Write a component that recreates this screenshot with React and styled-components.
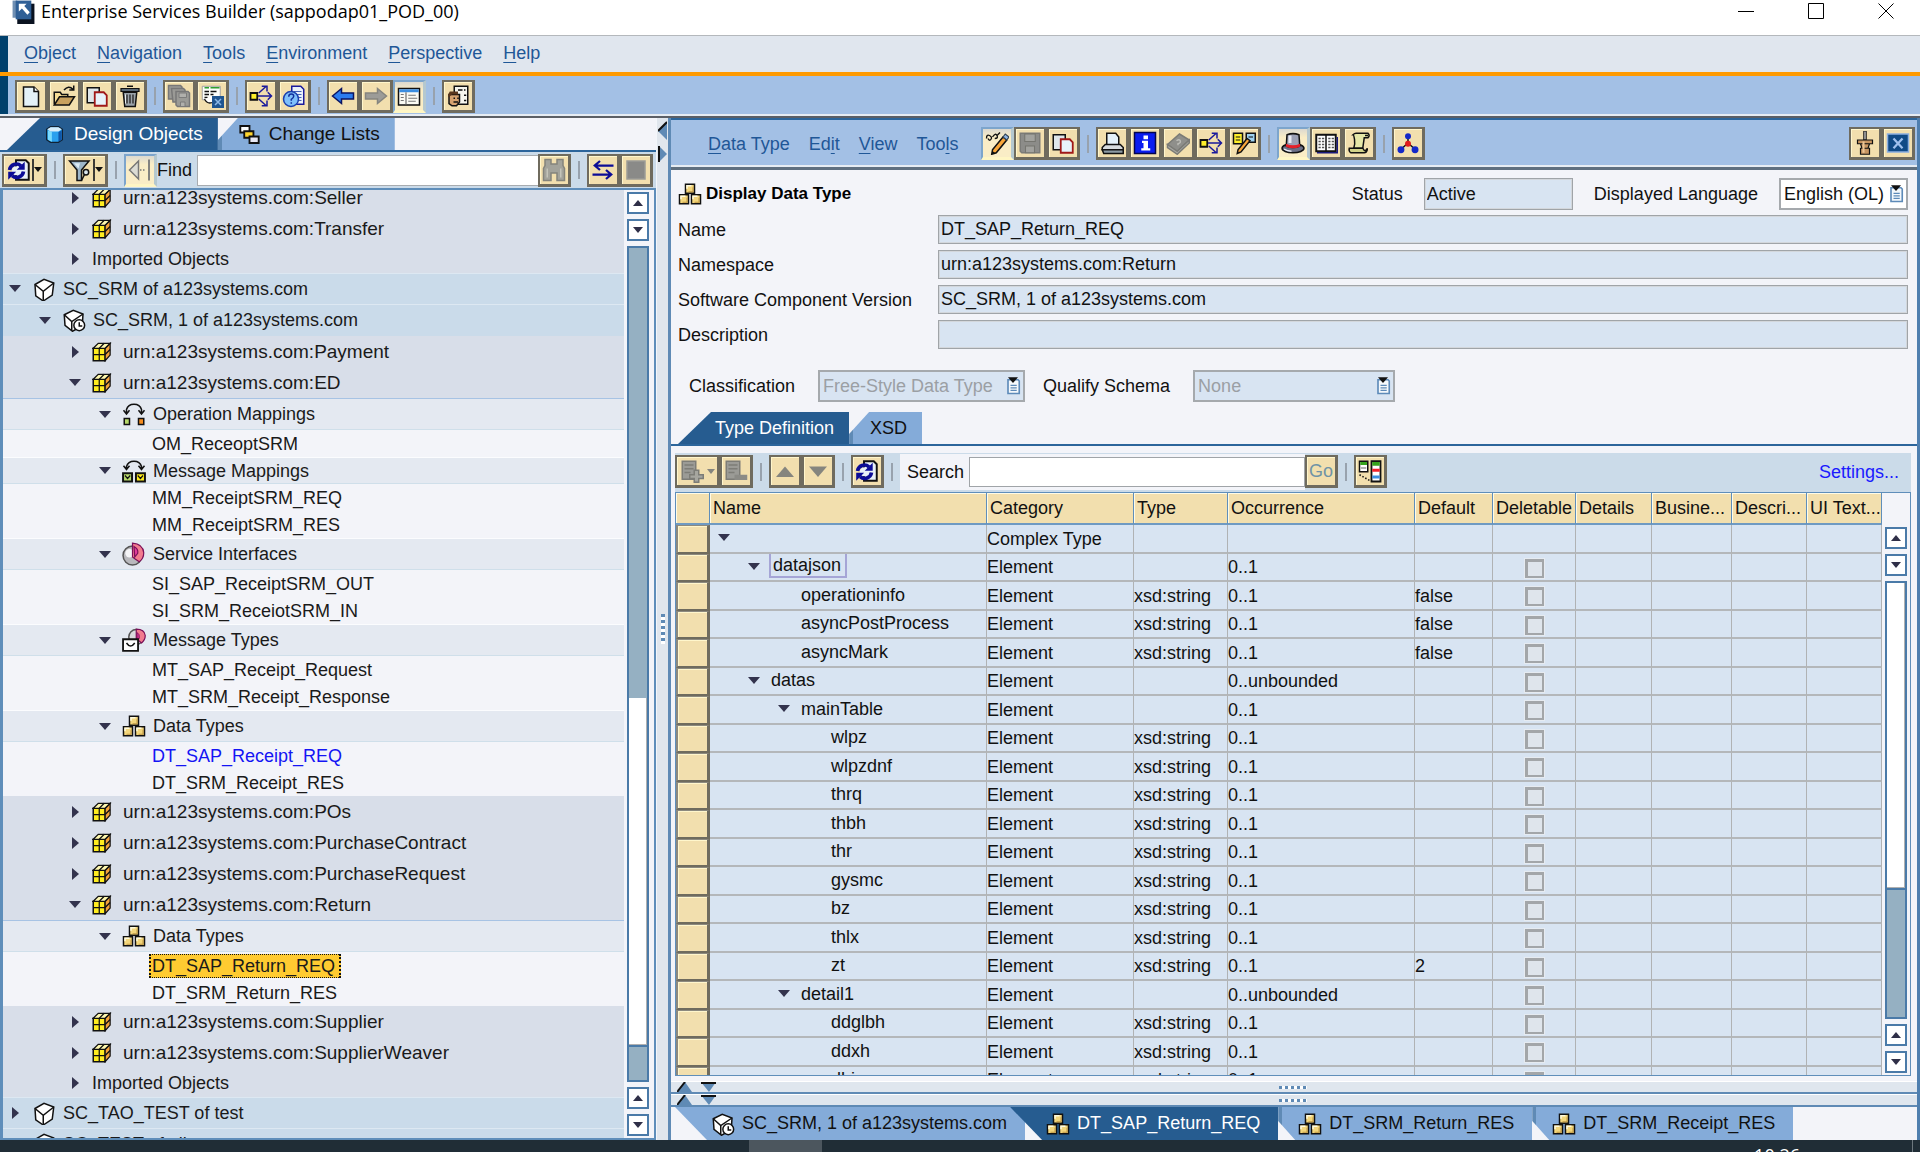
import React from "react";
import styled, { createGlobalStyle, css } from "styled-components";

const GlobalStyle = createGlobalStyle`
  *, *::before, *::after {
    box-sizing: border-box;
  }
  body {
    margin: 0;
    overflow: hidden;
  }
  body, button, input, select, table {
    font-family: "Liberation Sans", Arial, sans-serif;
    font-size: 18px;
    color: #111;
  }
  button {
    padding: 0;
    border: 0;
    background: none;
  }
`;

/* ---------- icons, drawn on a 16 unit grid ---------- */

const k = "#111";

const cube = (x, y) => (
  <>
    <path d={`M${x} ${y}h6v6h-6z`} fill="#f3d67c" stroke={k} />
    <path d={`M${x + 1} ${y + 3}v-2h3`} fill="none" stroke="#fffbe0" />
    <path d={`M${x + 2} ${y + 5}h3v-3`} fill="none" stroke="#b98f3c" strokeWidth=".6" />
  </>
);

const icons = {
  app: (
    <>
      <path d="M4 3h11v13H4z" fill="#0a1220" />
      <path d="M1 1h3v11H1z" fill="#6f8fb3" />
      <path d="M3 1h10v12H3z" fill="#2f5f96" />
      <path d="M5 3h5L8.500 4.500l3.500 4-1.500 1.500-3.500-4L5 8z" fill="#fff" />
    </>
  ),
  page: (
    <>
      <path d="M3 2h7l3 3v10H3z" fill="#e4f1f8" stroke={k} />
      <path d="M10 2v3h3" fill="#fff" stroke={k} />
    </>
  ),
  folder: (
    <>
      <path d="M1.500 13.500v-8h4l1 1.500h4v2" fill="#f6dc95" stroke={k} />
      <path d="M1.500 14l3.500-5.500h10L11.500 14z" fill="#c9a15e" stroke={k} />
      <path d="M8 4q3-3.500 6-.5M14.500 1v3h-3" fill="none" stroke={k} />
    </>
  ),
  copy: (
    <>
      <path d="M1.500 2.500h8v10h-8z" fill="#dfe6ea" stroke={k} />
      <path d="M6.500 5.500h6l2 2v7h-8z" fill="#e8f2fa" stroke="#a01818" strokeWidth="1.200" />
    </>
  ),
  trash: (
    <>
      <path d="M3.500 5.500h9l-1 9.500h-7z" fill="#9aa3aa" stroke={k} />
      <path d="M2 3h12v2H2z" fill="#5b6a77" stroke={k} strokeWidth=".8" />
      <path d="M6 1.500h4" stroke={k} />
      <path d="M6 7v6M8 7v6M10 7v6" stroke="#333" />
      <path d="M5 7v6" stroke="#e8eef2" strokeWidth=".7" />
    </>
  ),
  saveAll: (
    <>
      <path d="M1 1h8l1 1v8H1z" fill="#9a9a96" stroke="#777" />
      <path d="M3 3h8l1 1v8H4z" fill="#9a9a96" stroke="#777" />
      <path d="M6 5h8l1 1v9H7l-1-1z" fill="#9a9a96" stroke="#777" />
      <path d="M8 6h5v3H8zM9 12h3v3H9z" fill="#b0b0ac" stroke="#777" strokeWidth=".6" />
    </>
  ),
  listCancel: (
    <>
      <path d="M1.500 1.500h12v9h-12z" fill="#fbfdfa" stroke="#999" strokeWidth=".6" />
      <path d="M3 2.500h3M7 2.500h6" stroke="#2fa02f" />
      <path d="M3 5h3M7 5h4M3 7h3M3 9h2M7 7h2" stroke={k} strokeWidth=".9" />
      <path d="M3 10q2 4 6 2v-4" fill="#fff" stroke={k} strokeWidth=".8" />
      <path d="M8 8h8v8H8z" fill="#1f5590" />
      <path d="M10 10l4 4M14 10l-4 4" stroke="#8db8e6" />
    </>
  ),
  whereUsed: (
    <>
      <path d="M1 6h4.500v4.500H1z" fill="#ffef2a" stroke={k} strokeWidth="1.200" />
      <path d="M6 8h9M12.500 5.500L15 8l-2.500 2.500M6.500 6l5-4.500M8.500 1.500h3.500V5M6.500 10l5 4.500M8.500 14.500h3.500V11" fill="none" stroke="#1a1a9c" />
    </>
  ),
  helpPage: (
    <>
      <path d="M6.500 1.500h6l2 2v10h-8z" fill="#eaf1fb" stroke="#1a1a9c" />
      <path d="M8 5h5M10 7h3M11 9h2M11 11h2" stroke="#4564b8" strokeWidth=".8" />
      <circle cx="6" cy="10" r="5" fill="#7fc0fb" stroke="#1a3fae" />
      <path d="M4.500 8.500q0-1.800 1.700-1.800t1.600 1.500q0 1-1.600 2v1M6.200 12.200v1" fill="none" stroke="#12309c" />
    </>
  ),
  back: <path d="M1 8l6-5v3h8v4H7v3z" fill="#2b7cf0" stroke="#0a1462" />,
  forward: <path d="M15 8L9 3v3H1v4h8v3z" fill="#9c9c98" stroke="#85857f" />,
  layout: (
    <>
      <path d="M1 3h14v11H1z" fill="#fbfbf4" stroke={k} />
      <path d="M1.500 3.500h13v2h-13z" fill="#3c8ee0" />
      <path d="M6 5.500v8" stroke="#888" />
      <path d="M2.500 7h2M2.500 9h2M2.500 11h2M7.500 7.500h5M7.500 9.500h6M7.500 11.500h5" stroke="#777" strokeWidth=".8" />
    </>
  ),
  person: (
    <>
      <path d="M5.500 1.500h9v12h-9z" fill="#f6f6ee" stroke={k} />
      <path d="M8 4h3M12 4h1M12 7.500h1.500M12 11h1.500" stroke={k} />
      <path d="M2 7h7v5l-2 2.500H4L2 13z" fill="#d6a26f" stroke={k} />
      <path d="M1.500 9V7l1-2H8v2H4z" fill="#5a371d" />
      <path d="M5 9.500h1M7.500 9.500h1M5 12h3" stroke={k} />
    </>
  ),
  database: (
    <>
      <path d="M2 4l3-2h6l3 2v8l-3 2H5l-3-2z" fill="#2aa0ee" stroke="#123" />
      <path d="M3 5v7l3 1.500V6z" fill="#79dcff" />
      <path d="M11 6v7.500l2.500-1.500V5z" fill="#0f55a8" />
      <path d="M2.500 4L5 2.500h6L13.500 4 11 5.800H5z" fill="#d8edf9" />
    </>
  ),
  changeList: (
    <>
      <path d="M1 1.500h7v5H1z" fill="#fff" stroke={k} strokeWidth="1.400" />
      <path d="M4 5.500h7v5H4z" fill="#ffd52e" stroke={k} strokeWidth="1.400" />
      <path d="M8 9.500h7v5H8z" fill="#e8e8f4" stroke={k} strokeWidth="1.400" />
    </>
  ),
  refresh: (
    <>
      <path d="M6 1.500h6.500l2 2v11H6z" fill="#e9f1f8" stroke={k} strokeWidth="1.300" />
      <circle cx="6.300" cy="8.500" r="3" fill="#e9f1f8" />
      <path d="M1.700 8a4.600 4.600 0 0 1 7.600-2.800M11 9a4.600 4.600 0 0 1-7.600 2.800" fill="none" stroke="#0c0c96" strokeWidth="2.400" />
      <path d="M11.800 2.500v5.300H6.500zM.800 14.500V9.200h5.300z" fill="#0c0c96" />
    </>
  ),
  filter: (
    <>
      <path d="M1 2h13l-5 6v7H6V8z" fill="#9db6c9" stroke={k} />
      <path d="M4 3.500h4L7 7z" fill="#dcebf5" />
      <circle cx="12" cy="9.500" r="1.800" fill="#dbe7ee" stroke={k} />
      <path d="M9 15l2-4" stroke={k} />
    </>
  ),
  collapse: (
    <>
      <path d="M1 8l6-6v12z" fill="#dcdcd4" stroke="#777" />
      <path d="M8 8h4" stroke="#777" strokeDasharray="1 1" />
      <path d="M14 1v14" stroke="#777" strokeWidth="1.200" />
    </>
  ),
  binoculars: (
    <>
      <path d="M2 1h4v3h4V1h4v4l1 2v8h-5v-5H6v5H1V7l1-2z" fill="#a3a39b" stroke="#84847c" />
      <path d="M3.500 7v6M12.500 7v6" stroke="#c4c4ba" />
    </>
  ),
  swap: <path d="M15 5H3M6 2L2.500 5 6 8M1 11h12M10 8l3.500 3-3.500 3" fill="none" stroke="#0c0c96" strokeWidth="1.500" />,
  stop: <path d="M2 2h12v12H2z" fill="#8a8a88" stroke="#9c9c96" />,
  pack: (
    <>
      <path d="M1 5h9.500v10H1z" fill="#ffec1f" stroke={k} strokeWidth="1.200" />
      <path d="M10.500 5l4-4v9.500l-4 4.500z" fill="#f2a23c" stroke={k} />
      <path d="M1 5l4-4h9.500l-4 4z" fill="#fff9b0" stroke={k} />
      <path d="M5.800 5v10M1 10h9.500M5.800 5l4-4M10.500 10l4-4" stroke={k} />
    </>
  ),
  box: (
    <>
      <path d="M2 5l6-3.500 6.500 2.500-1 8-6 4-5-3.500z" fill="#fff" stroke={k} />
      <path d="M2 5l5.500 4.500L14.500 4M7.500 9.500V16" fill="none" stroke={k} />
    </>
  ),
  boxClock: (
    <>
      <path d="M1.500 4.500l6-3 6.500 2.500-.5 8-6.500 3.500-5-4z" fill="#fff" stroke={k} />
      <path d="M1.500 4.500L6.500 9 14 4M6.500 9v6" fill="none" stroke={k} />
      <circle cx="11.500" cy="11.500" r="3.600" fill="#fff" stroke={k} />
      <path d="M11.500 9.500v2.500h2" fill="none" stroke={k} />
    </>
  ),
  opMap: (
    <>
      <path d="M3 8V5q1-3.500 5-3.500T13 5v3M1 5.500L3 8l2-2.500M11 5.500L13 8l2-2.500" fill="none" stroke={k} />
      <path d="M1.500 11h3.500v4H1.500z" fill="#b7d96a" stroke={k} />
      <path d="M11 11h3.500v4H11z" fill="#f58b1e" stroke={k} />
    </>
  ),
  msgMap: (
    <>
      <path d="M3 7V5q1-3.500 5-3.500T13 5v2M1 4.500L3 7l2-2.500M11 4.500L13 7l2-2.500" fill="none" stroke={k} />
      <path d="M.700 9.500h6v5.500h-6z" fill="#b7d96a" stroke={k} strokeWidth="1.300" />
      <path d="M9.300 9.500h6v5.500h-6z" fill="#ffec1f" stroke={k} strokeWidth="1.300" />
      <path d="M2 11l1.700 2L5.500 11M10.500 11l1.800 2 1.700-2" fill="none" stroke={k} strokeWidth=".8" />
    </>
  ),
  service: (
    <>
      <circle cx="7" cy="9" r="6.300" fill="#b9b9bd" stroke="#555" />
      <circle cx="5" cy="7.500" r="2.800" fill="#f4f4f6" />
      <path d="M7 .7q7 .5 7.500 6.500 0 4-3 6L9 11.500 7 10z" fill="#f27b8e" stroke="#7a0f58" strokeWidth=".8" />
      <path d="M8 3q3 1.500 2.500 4.500L8.500 10z" fill="#e23c9c" stroke="#7a0f58" strokeWidth=".8" />
    </>
  ),
  msgType: (
    <>
      <circle cx="9.500" cy="6" r="5" fill="#d9d9dd" stroke="#555" />
      <path d="M9.500.7Q15 .7 15.500 5q0 3-2.500 5l-3.500-3z" fill="#f27b8e" stroke="#7a0f58" strokeWidth=".8" />
      <path d="M10 3q2 1 1.500 4l-1.500 1z" fill="#e23c9c" stroke="#7a0f58" strokeWidth=".6" />
      <path d="M.7 7.500h10v7.800H.7z" fill="#fff" stroke={k} strokeWidth="1.200" />
      <path d="M3 10q2.700 4 5.500 0" fill="none" stroke={k} />
    </>
  ),
  dataType: (
    <>
      {cube(5, 1.5)}
      {cube(1, 8.5)}
      {cube(9, 8.5)}
    </>
  ),
  edit: (
    <>
      <path d="M1 5q0-3 2-2t1 2.500T2 5M5 4q2-3 3-1T6.500 5M8 3l2-2" fill="none" stroke={k} strokeWidth=".9" />
      <path d="M5 12.500l7-8.500 2.500 2-7 8.500-3 1z" fill="#f9a63a" stroke={k} />
      <path d="M12 4l1.500-2 2.500 2-1.500 2z" fill="#8fb6e8" stroke="#345" strokeWidth=".8" />
      <path d="M4.300 15.500l.6-2.200 1.800 1.200z" fill={k} />
    </>
  ),
  save: (
    <>
      <path d="M1.500 1.500h13v13h-12l-1-1z" fill="#8c8c89" stroke="#7b7b78" />
      <path d="M4.500 2h7v5h-7zM5 10h6v4.500H5z" fill="#a2a29e" stroke="#75756f" strokeWidth=".7" />
    </>
  ),
  print: (
    <>
      <path d="M4.500 1.500h6l2 2.500v6h-8z" fill="#e4f1fa" stroke={k} />
      <path d="M1.500 11l2-2h10l2 2v1.500h-14z" fill="#d7dbde" stroke={k} />
      <path d="M1.500 12.500h14v2.500h-13z" fill="#8d9ba5" stroke={k} />
    </>
  ),
  info: (
    <>
      <path d="M1 1h14v14H1z" fill="#0a1cf0" stroke="#04044e" />
      <path d="M7 3h3v2.500H7zM6 6.500h4v5h1.500V13H5.500v-1.500H7V8H6z" fill="#fff" />
    </>
  ),
  book: (
    <>
      <path d="M1 9l8-7 6.500 4-8 7.500z" fill="#8f8f8b" stroke="#7b7b76" />
      <path d="M1 9l6.500 4.500 8-7.500v2l-8 7.500L1 11z" fill="#a9a9a4" stroke="#7b7b76" />
      <path d="M7 6.500q2-1.500 2.500 0T8 8.500v1" fill="none" stroke="#bcbcb6" />
    </>
  ),
  compare: (
    <>
      <path d="M1 1.500h6v7H1z" fill="#fff02a" stroke={k} />
      <path d="M2.500 4h3M2.500 6h3" stroke={k} strokeWidth=".7" />
      <path d="M9.500 1.500h6v6h-6z" fill="#9fd2f0" stroke={k} />
      <path d="M11 4h3" stroke={k} strokeWidth=".7" />
      <path d="M4 12.500L10 5l2 1.500-6 7.500-2.500 1z" fill="#f9a63a" stroke={k} />
    </>
  ),
  hat: (
    <>
      <ellipse cx="8" cy="11.500" rx="7.300" ry="3" fill="#6b6f86" stroke={k} />
      <path d="M4 2.500q4-1.500 8 0l.5 7.500q-4.500 2-9 0z" fill="#9a9fb5" stroke={k} />
      <path d="M6 3v5" stroke="#e8eaf4" strokeWidth="2" />
      <path d="M3.300 8.500q4.700 2 9.400 0v2q-4.700 2-9.400 0z" fill="#e5202a" />
      <path d="M2 12q2 1.500 5 1.500" fill="none" stroke="#e8eaf4" />
    </>
  ),
  openBook: (
    <>
      <path d="M1.500 2.500h13v11h-13z" fill="#fff" stroke={k} strokeWidth="1.300" />
      <path d="M8 2.500v12" stroke={k} />
      <path d="M3 5h4M3 7h4M3 9h4M3 11h4M9.500 5h4M9.500 7h4M9.500 9h4M9.500 11h4" stroke="#555" strokeWidth=".9" strokeDasharray="1.500 .8" />
      <path d="M2 14.500h13.500V4" fill="none" stroke="#1a1a7c" />
    </>
  ),
  scroll: (
    <>
      <path d="M4 2.500q1-1 2-1h8q1.500 1.500 0 3h-2.500l-1 7h-6q1-3 .5-6T4 2.500z" fill="#e6e8a8" stroke={k} />
      <path d="M1.500 11.500h9q1.500 3 3 0v1q-.5 2-2 2h-9q-1.500-1-1-3z" fill="#d2d38a" stroke={k} />
      <path d="M12 3h2" stroke={k} />
    </>
  ),
  molecule: (
    <>
      <path d="M8 3v5l-5 4.500M8 8l5 4.500" fill="none" stroke={k} />
      <circle cx="8" cy="3.500" r="2" fill="#1428c8" />
      <circle cx="3.300" cy="12.500" r="2.300" fill="#1428c8" />
      <circle cx="12.700" cy="12.500" r="2.300" fill="#1428c8" />
      <circle cx="8" cy="8.500" r="2" fill="#e01c1c" />
    </>
  ),
  pin: (
    <>
      <path d="M7.200 0v6h1.600V0z" fill="#ccc" stroke={k} strokeWidth=".7" />
      <path d="M3 6h10v2.500H3zM5 8.500h6l-1 3h-4zM5 11.500h6v4H5z" fill="#c79561" stroke={k} strokeWidth=".8" />
      <path d="M7 7v7.500" stroke="#ecc596" strokeWidth="1.400" />
    </>
  ),
  close: (
    <>
      <path d="M1 2h14v12H1z" fill="#104a86" stroke="#8aaee0" />
      <path d="M5 5l6 6.500M11 5l-6 6.500" stroke="#9fc0ee" strokeWidth="1.500" />
    </>
  ),
  addRow: (
    <>
      <path d="M1.500 1.500h9v12h-9z" fill="#9b9b96" stroke="#7d7d77" />
      <path d="M3 4h6M3 6.500h6M3 9h4" stroke="#7d7d77" />
      <path d="M9.500 7.500h3v3h3v2.500h-3v2.500h-3V13h-3v-2.500h3z" fill="#a6a69f" stroke="#7d7d77" />
    </>
  ),
  removeRow: (
    <>
      <path d="M1.500 1.500h9v12h-9z" fill="#9b9b96" stroke="#7d7d77" />
      <path d="M3 4h6M3 6.500h6M3 9h4" stroke="#7d7d77" />
      <path d="M7 10.500h8.500v3.500H7z" fill="#8b8b86" />
    </>
  ),
  up: <path d="M2 12h12L8 5z" fill="#85857e" />,
  down: <path d="M2 5h12l-6 7z" fill="#85857e" />,
  mapping: (
    <>
      <path d="M1 1.500h5.500v7H1z" fill="#fff" stroke={k} />
      <path d="M1.500 2h4.500v2H1.500z" fill="#35a31c" />
      <path d="M2 6h3.500" stroke="#999" />
      <path d="M9 1.500h6v13.500H9z" fill="#fff" stroke={k} strokeWidth="1.200" />
      <path d="M9.500 2h5v2.500h-5z" fill="#35a31c" />
      <path d="M9.500 6.500h5v2h-5z" fill="#f3202a" />
      <path d="M9.500 11h5v2h-5z" fill="#3c8ee0" />
      <path d="M1 10.500l7 4" stroke={k} strokeDasharray="1 1.200" />
    </>
  ),
  dropdown: (
    <>
      <path d="M4 3h8l1 1v10H4z" fill="#f4f8fc" stroke="#5d8ab8" strokeWidth="1.300" />
      <path d="M6 7.500h5M6 9.500h5M6 11.500h5" stroke="#5d8ab8" />
      <path d="M4 1h8L8 5.500z" fill={k} />
    </>
  ),
};

const Icon = ({ name, size = 24 }) => (
  <svg width={size} height={size} viewBox="0 0 16 16" aria-hidden="true">
    {icons[name]}
  </svg>
);

/* ---------- window frame ---------- */

const Window = styled.div`
  height: 100vh;
  display: flex;
  flex-direction: column;
  overflow: hidden;
  background: #f3f4f9;
  white-space: nowrap;
  line-height: 22px;
`;

const TitleBar = styled.header`
  flex: 0 0 36px;
  display: flex;
  align-items: flex-start;
  justify-content: space-between;
  padding: 0 17px 0 11px;
  background: #fff;
  border-bottom: 1px solid #b4b8bc;
  overflow: hidden;
`;

const WindowTitle = styled.h1`
  display: flex;
  align-items: center;
  gap: 5px;
  height: 22px;
  margin: 0;
  font: 400 18px/22px "Open Sans", "Noto Sans", sans-serif;
  color: #000;
`;

const WindowControls = styled.div`
  display: flex;
  gap: 36px;
`;

const WindowButton = styled.button`
  width: 34px;
  height: 22px;
  display: grid;
  place-items: center;
`;

const MenuBar = styled.nav`
  flex: 0 0 36px;
  display: flex;
  align-items: center;
  gap: 21px;
  padding: 0 0 2px 16px;
  background: #e0e6ee;
  border-left: 8px solid #00406c;
`;

const MenuButton = styled.button`
  color: #1f5797;
  line-height: 22px;
  u {
    text-underline-offset: 3px;
  }
`;

const MainToolbar = styled.div`
  flex: 0 0 46px;
  display: flex;
  align-items: center;
  padding: 0 7px 0 15px;
  background: #a3c0e5;
  border-top: 4px solid #ff9a00;
  border-bottom: 2px solid #5b5f66;
  box-shadow: inset 0 -2px #e6ecf3, inset 8px 0 #00406c;
`;

const ToolButton = styled.button`
  flex: none;
  width: ${(p) => (p.$wide ? 45 : 33)}px;
  height: 33px;
  display: flex;
  align-items: center;
  justify-content: center;
  border: 2px solid #6f6b5e;
  border-width: 2px 3px 3px 2px;
  background: #f2dfae;
  box-shadow: inset 1px 1px #fff6cc;
  color: #6f93a6;
  ${(p) =>
    p.$pressed &&
    css`
      border-color: #7da5cc #b5c8cf #fff6c4 #7da5cc;
      background: linear-gradient(#dcd9d0, #faedc6 30%);
      box-shadow: none;
    `}
`;

const Divider = styled.span`
  flex: none;
  width: 16px;
  height: 18px;
  display: flex;
  justify-content: center;
  &::before {
    content: "";
    width: 2px;
    background: #98a2ad;
  }
`;

const Arrow = styled.span`
  width: 10px;
  height: 22px;
  margin-left: 1px;
  display: flex;
  align-items: center;
  justify-content: flex-end;
  border-left: ${(p) => (p.$line ? "2px solid #3b3a36" : "0")};
  &::after {
    content: "";
    border: 4px solid transparent;
    border-top: 5px solid ${(p) => (p.$line ? "#111" : "#85857e")};
    border-bottom: 0;
  }
`;

const Workspace = styled.div`
  flex: 1;
  min-height: 0;
  display: flex;
`;

/* ---------- left panel ---------- */

const SidePanel = styled.aside`
  flex: 0 0 656px;
  display: flex;
  flex-direction: column;
  min-width: 0;
`;

const TabStrip = styled.div`
  flex: none;
  display: flex;
  height: 34px;
  padding-left: 7px;
  background: #f3f4f9;
  border-bottom: 2px solid #2c659b;
`;

const Tab = styled.button`
  display: flex;
  align-items: center;
  gap: 9px;
  height: 32px;
  padding: 0 15px 0 ${(p) => (p.$active ? 37 : 21)}px;
  font-size: ${(p) => (p.$large ? 19 : 18)}px;
  color: ${(p) => (p.$active ? "#fff" : "#111")};
  background: ${(p) => (p.$active ? "#265c90" : "linear-gradient(90deg, #5f8ab5 4px, #84abd9 4px)")};
  clip-path: ${(p) => (p.$active ? "polygon(33px 0, 100% 0, 100% 100%, 0 100%)" : "polygon(20px 0, 100% 0, 100% 100%, 0 100%, 0 22px)")};
`;

const SideTools = styled.div`
  flex: 0 0 36px;
  display: flex;
  align-items: center;
  padding: 0 3px 0 2px;
  background: #cbdbe9;
`;

const FindInput = styled.input`
  flex: 1;
  min-width: 0;
  height: 31px;
  margin-left: 5px;
  padding: 0 4px;
  border: 1px solid #a8acb0;
  border-right: 0;
  background: #fff;
`;

const TreePane = styled.div`
  flex: 1;
  min-height: 0;
  display: flex;
  padding-right: 2px;
  border: 2px solid #5f8eba;
  border-left-width: 3px;
  background: #f3f4f9;
`;

const TreeClip = styled.div`
  flex: 1;
  min-width: 0;
  overflow: hidden;
`;

const TreeList = styled.ul`
  margin: -8px 0 0;
  padding: 0;
  list-style: none;
`;

const rowKinds = {
  comp: { height: 31, bg: "#cadbea", top: "#dde8f2" },
  version: { height: 32, bg: "#cadbea", top: "#dde8f2" },
  pack: { height: 31, bg: "#d8dee9", top: "#d8dee9" },
  imported: { height: 29, bg: "#d8dee9", top: "#d8dee9" },
  cat: { height: 32, bg: "#e4e9f1", top: "#fbfcfe", bottom: "#cfdfea" },
  slimCat: { height: 27, bg: "#e4e9f1", top: "#fbfcfe", bottom: "#cfdfea" },
  leaf: { height: 27, bg: "#f3f4f9", top: "#f3f4f9" },
};

const TreeRow = styled.li`
  display: flex;
  align-items: center;
  height: ${(p) => rowKinds[p.$kind].height}px;
  padding-left: ${(p) => 5 + p.$level * 30}px;
  background: ${(p) => rowKinds[p.$kind].bg};
  border-top: 1px solid ${(p) => (p.$first ? "#a7c3e4" : rowKinds[p.$kind].top)};
  border-bottom: 1px solid ${(p) => rowKinds[p.$kind].bottom || rowKinds[p.$kind].bg};
  font-size: ${(p) => (p.$kind === "pack" ? 19 : 18)}px;
  color: ${(p) => (p.$link ? "#1414f4" : "#1a1a1a")};
`;

const Caret = styled.span`
  flex: none;
  width: 14px;
  margin-right: 10px;
  display: flex;
  justify-content: center;
  &::before {
    content: "";
    border: 6px solid transparent;
    ${(p) =>
      p.$open &&
      css`
        border-top: 7px solid #33334d;
        border-bottom: 0;
      `}
    ${(p) =>
      p.$closed &&
      css`
        border-left: 7px solid #33334d;
        border-right: 0;
      `}
  }
`;

const RowIcon = styled.span`
  flex: none;
  width: 31px;
  display: flex;
  align-items: center;
`;

const Selected = styled.span`
  margin-left: -3px;
  padding: 0 4px 0 1px;
  border: 2px dotted #111;
  border-width: 1px 2px;
  background: #ffcb31;
`;

const tree = [
  ["pack", 2, "closed", "pack", "urn:a123systems.com:Seller"],
  ["pack", 2, "closed", "pack", "urn:a123systems.com:Transfer"],
  ["imported", 2, "closed", null, "Imported Objects"],
  ["comp", 0, "open", "box", "SC_SRM of a123systems.com"],
  ["version", 1, "open", "boxClock", "SC_SRM, 1 of a123systems.com"],
  ["pack", 2, "closed", "pack", "urn:a123systems.com:Payment"],
  ["pack", 2, "open", "pack", "urn:a123systems.com:ED"],
  ["cat", 3, "open", "opMap", "Operation Mappings", "first"],
  ["leaf", 4, "", null, "OM_ReceoptSRM"],
  ["slimCat", 3, "open", "msgMap", "Message Mappings"],
  ["leaf", 4, "", null, "MM_ReceiptSRM_REQ"],
  ["leaf", 4, "", null, "MM_ReceiptSRM_RES"],
  ["cat", 3, "open", "service", "Service Interfaces"],
  ["leaf", 4, "", null, "SI_SAP_ReceiptSRM_OUT"],
  ["leaf", 4, "", null, "SI_SRM_ReceiotSRM_IN"],
  ["cat", 3, "open", "msgType", "Message Types"],
  ["leaf", 4, "", null, "MT_SAP_Receipt_Request"],
  ["leaf", 4, "", null, "MT_SRM_Receipt_Response"],
  ["cat", 3, "open", "dataType", "Data Types"],
  ["leaf", 4, "", null, "DT_SAP_Receipt_REQ", "link"],
  ["leaf", 4, "", null, "DT_SRM_Receipt_RES"],
  ["pack", 2, "closed", "pack", "urn:a123systems.com:POs"],
  ["pack", 2, "closed", "pack", "urn:a123systems.com:PurchaseContract"],
  ["pack", 2, "closed", "pack", "urn:a123systems.com:PurchaseRequest"],
  ["pack", 2, "open", "pack", "urn:a123systems.com:Return"],
  ["cat", 3, "open", "dataType", "Data Types", "first"],
  ["leaf", 4, "", null, "DT_SAP_Return_REQ", "selected"],
  ["leaf", 4, "", null, "DT_SRM_Return_RES"],
  ["pack", 2, "closed", "pack", "urn:a123systems.com:Supplier"],
  ["pack", 2, "closed", "pack", "urn:a123systems.com:SupplierWeaver"],
  ["imported", 2, "closed", null, "Imported Objects"],
  ["comp", 0, "closed", "box", "SC_TAO_TEST of test"],
  ["comp", 0, "closed", "box", "SC_TEST of all"],
];

/* ---------- scroll bar ---------- */

const ScrollBar = styled.div`
  flex: none;
  width: 28px;
  display: flex;
  flex-direction: column;
  align-items: center;
  gap: 5px;
  padding: ${(p) => p.$pad || "2px 0"};
`;

const ScrollButton = styled.button`
  flex: none;
  width: 22px;
  height: 22px;
  display: grid;
  place-items: center;
  border: 2px solid #4a7aa8;
  background: #fff;
  &::before {
    content: "";
    border: 5px solid transparent;
    ${(p) =>
      p.$up
        ? css`
            border-bottom: 6px solid #2f2f48;
            border-top: 0;
          `
        : css`
            border-top: 6px solid #2f2f48;
            border-bottom: 0;
          `}
  }
`;

const Track = styled.div`
  flex: 1;
  width: 22px;
  display: flex;
  flex-direction: column;
  border: 2px solid #4a7aa8;
  background: #95b0c2;
`;

const Before = styled.div`
  flex: ${(p) => p.$share} 1 0;
`;

const Thumb = styled.div`
  flex: ${(p) => p.$share} 1 0;
  background: #fff;
  border-bottom: 2px solid #4a7aa8;
  box-shadow: inset -1px -1px #b0b0b0;
`;

function Scroller({ before, thumb, after, pad }) {
  return (
    <ScrollBar $pad={pad}>
      <ScrollButton $up aria-label="Scroll up" />
      <ScrollButton aria-label="Scroll down" />
      <Track>
        <Before $share={before} />
        <Thumb $share={thumb} />
        <Before $share={after} />
      </Track>
      <ScrollButton $up aria-label="Scroll up" />
      <ScrollButton aria-label="Scroll down" />
    </ScrollBar>
  );
}

/* ---------- splitters ---------- */

const VSplit = styled.div`
  flex: 0 0 12px;
  display: flex;
  flex-direction: column;
  justify-content: center;
  align-items: center;
  background: #e0e6ed;
  border-left: 1px solid #f3f6fa;
  &::after {
    content: "";
    flex: 1;
  }
`;

const VArrows = styled.div`
  flex: 1;
`;

const VDots = styled.div`
  width: 4px;
  height: 30px;
  background: repeating-linear-gradient(#5f8ab5 0 3px, #fff 3px 6px);
`;

const HSplit = styled.div`
  flex: none;
  height: 13px;
  display: flex;
  align-items: center;
  padding: 0 48px 0 6px;
  background: #dfe6ee;
  border-top: 1px solid #fff;
  border-bottom: 2px solid #5f8ab5;
`;

const HDots = styled.div`
  width: 28px;
  height: 3px;
  margin: 0 auto;
  background: repeating-linear-gradient(90deg, #5f8ab5 0 3px, #fff 3px 6px);
`;

/* ---------- right panel ---------- */

const Editor = styled.main`
  flex: 1;
  min-width: 0;
  display: flex;
  flex-direction: column;
  border-left: 3px solid #5f8ab5;
  border-right: 3px solid #4f7faf;
`;

const EditorBar = styled.div`
  flex: 0 0 52px;
  display: flex;
  align-items: center;
  padding: 0 2px 0 37px;
  background: #a3c0e5;
  border-top: 2px solid #2c659b;
  border-bottom: 3px solid #5f6f7f;
  box-shadow: inset 0 -2px #e6ecf3;
`;

const EditorMenu = styled.nav`
  display: flex;
  gap: 19px;
  margin-right: 22px;
`;

const Spacer = styled.span`
  flex: 1;
`;

const Form = styled.section`
  flex: none;
  display: flex;
  flex-direction: column;
  gap: 5px;
  padding: 8px 9px 10px 7px;
`;

const HeaderRow = styled.div`
  display: flex;
  align-items: center;
  height: 32px;
`;

const Heading = styled.h2`
  display: flex;
  align-items: center;
  gap: 4px;
  margin: 0;
  font-size: 17px;
  color: #000;
`;

const Label = styled.label`
  margin: 0 21px;
`;

const FieldGrid = styled.div`
  display: grid;
  grid-template-columns: 260px 1fr;
  grid-auto-rows: 29px;
  row-gap: 6px;
  align-items: center;
`;

const Field = styled.input`
  height: ${(p) => (p.$status ? 32 : 29)}px;
  width: ${(p) => (p.$status ? "149px" : "100%")};
  padding: 0 2px;
  border: 1px solid #a0a4a8;
  outline: 1px solid #d3d7dc;
  outline-offset: -2px;
  background: #d8e4f2;
`;

const SelectBox = styled.span`
  display: grid;
  align-items: center;
  width: ${(p) => p.$width}px;
  height: 32px;
  > * {
    grid-area: 1 / 1;
  }
  svg {
    justify-self: end;
    margin-right: 2px;
    pointer-events: none;
  }
`;

const Select = styled.select`
  appearance: none;
  width: 100%;
  height: 32px;
  padding: 0 3px;
  border: 2px solid #a5a9ad;
  border-radius: 0;
  background: ${(p) => (p.disabled ? "#d8e4f2" : "#fff")};
  color: ${(p) => (p.disabled ? "#9b9fa4" : "#111")};
  opacity: 1;
`;

const OptionsRow = styled.div`
  display: flex;
  align-items: center;
  padding: 16px 0 0 11px;
  label + span {
    margin-right: 18px;
  }
`;

const OptionLabel = styled.label`
  margin-right: 23px;
`;

const TablePanel = styled.section`
  flex: 1;
  min-height: 0;
  display: flex;
  flex-direction: column;
  margin: 7px 6px 5px 4px;
  background: #cbdbe9;
`;

const TableTools = styled.div`
  flex: 0 0 39px;
  display: flex;
  align-items: center;
  padding-bottom: 2px;
`;

const SearchBox = styled.div`
  display: flex;
  align-items: center;
  height: 36px;
  padding-left: 7px;
  background: #f3f4f9;
`;

const SearchInput = styled.input`
  width: 336px;
  height: 30px;
  margin-left: 5px;
  padding: 0 4px;
  border: 1px solid #a0a4a8;
  background: #fff;
`;

const SettingsLink = styled.a`
  margin-right: 12px;
  color: #1a1aff;
  text-decoration: none;
`;

const GridArea = styled.div`
  flex: 1;
  min-height: 0;
  display: flex;
  border: 1px solid #5f8eba;
  background: #f3f4f9;
`;

const GridClip = styled.div`
  flex: 1;
  min-width: 0;
  overflow: hidden;
`;

const Grid = styled.table`
  width: 100%;
  table-layout: fixed;
  border-collapse: separate;
  border-spacing: 0;
`;

const Th = styled.th`
  width: ${(p) => (p.$width ? `${p.$width}px` : "auto")};
  height: 32px;
  padding: 0 0 0 3px;
  overflow: hidden;
  text-align: left;
  font-weight: 400;
  background: #f2dfae;
  border-right: 1px solid #5f8eba;
  border-bottom: 2px solid #6f9ac2;
  box-shadow: inset 1px 1px #fffbe6;
`;

const Tr = styled.tr`
  height: 28px;
  &:nth-child(odd) {
    height: 29px;
  }
`;

const Td = styled.td`
  padding: 0;
  background: #d8e4f2;
  border-right: 1px solid #b0b2b4;
  border-bottom: 2px solid #b4b7ba;
  line-height: 20px;
`;

const SelectorTd = styled(Td)`
  background: #f2dfae;
  border: 2px solid #6f6b5e;
  border-left: 2px solid #8c897f;
  border-top: 1px solid #8c897f;
  border-right-width: 3px;
  box-shadow: inset 1px 1px #fff6cc;
`;

const RowSelector = styled.button`
  display: block;
  width: 100%;
  height: 20px;
`;

const NameCell = styled.div`
  display: flex;
  align-items: center;
  height: 24px;
  padding: 0 0 2px ${(p) => 7 + p.$level * 30}px;
`;

const Focused = styled.span`
  padding: 1px 4px 1px 2px;
  margin-left: -2px;
  border: 2px solid #a5a5d6;
  border-top: 0;
`;

const Check = styled.input`
  appearance: none;
  display: block;
  width: 19px;
  height: 19px;
  margin: 2px auto 0;
  border: 2px solid #a3a6a9;
  border-width: 3px 2px 2px 3px;
  background: #dfe5ec;
  outline: 1px solid #e6ebf1;
`;

const BottomTabs = styled.div`
  flex: none;
  display: flex;
  height: 33px;
  padding-left: 4px;
  background: #f3f4f9;
`;

const BottomTab = styled.button`
  display: flex;
  align-items: center;
  gap: 7px;
  height: 33px;
  padding: 0 18px 0 ${(p) => (p.$first || p.$active ? 36 : 20)}px;
  margin-left: ${(p) => (p.$active ? -15 : 0)}px;
  color: ${(p) => (p.$active ? "#fff" : "#111")};
  background: ${(p) => (p.$active ? "#265c90" : p.$first ? "#84abd9" : "linear-gradient(90deg, #5f8ab5 4px, #84abd9 4px)")};
  clip-path: ${(p) => (p.$first || p.$active ? "polygon(0 0, 100% 0, 100% 100%, 32px 100%)" : "polygon(0 0, 100% 0, 100% 100%, 17px 100%, 0 14px)")};
`;

const TaskBar = styled.footer`
  flex: 0 0 12px;
  display: flex;
  justify-content: space-between;
  padding: 0 7px 0 749px;
  overflow: hidden;
  background: #202d36;
`;

const TaskItem = styled.span`
  width: 73px;
  background: #4c565e;
`;

const Clock = styled.time`
  padding: 3px 112px 0 0;
  border-right: 1px solid #6d777e;
  font: 18px/24px "Open Sans", sans-serif;
  color: #fff;
`;

/* ---------- data type definition ---------- */

const columns = [
  ["", 34],
  ["Name"],
  ["Category", 147],
  ["Type", 94],
  ["Occurrence", 187],
  ["Default", 78],
  ["Deletable", 83],
  ["Details", 76],
  ["Busine...", 80],
  ["Descri...", 75],
  ["UI Text...", 75],
];

const str = "xsd:string";

// level, name, type, occurrence, default value, expandable
const elements = [
  [1, "datajson", "", "0..1", "", true],
  [2, "operationinfo", str, "0..1", "false"],
  [2, "asyncPostProcess", str, "0..1", "false"],
  [2, "asyncMark", str, "0..1", "false"],
  [1, "datas", "", "0..unbounded", "", true],
  [2, "mainTable", "", "0..1", "", true],
  [3, "wlpz", str, "0..1", ""],
  [3, "wlpzdnf", str, "0..1", ""],
  [3, "thrq", str, "0..1", ""],
  [3, "thbh", str, "0..1", ""],
  [3, "thr", str, "0..1", ""],
  [3, "gysmc", str, "0..1", ""],
  [3, "bz", str, "0..1", ""],
  [3, "thlx", str, "0..1", ""],
  [3, "zt", str, "0..1", "2"],
  [2, "detail1", "", "0..unbounded", "", true],
  [3, "ddglbh", str, "0..1", ""],
  [3, "ddxh", str, "0..1", ""],
  [3, "dhj", str, "0..1", ""],
];

// "|" is a divider, "*" marks a pressed button
function Tools({ items }) {
  return items.map((item, i) =>
    item === "|" ? (
      <Divider key={i} />
    ) : (
      <ToolButton key={i} $pressed={item.endsWith("*")} aria-label={item.replace("*", "")}>
        <Icon name={item.replace("*", "")} />
      </ToolButton>
    )
  );
}

// "&" stands before the access key
function Menu({ text }) {
  const [before, rest] = text.split("&");
  return (
    <MenuButton>
      {before}
      <u>{rest[0]}</u>
      {rest.slice(1)}
    </MenuButton>
  );
}

function Sidebar() {
  return (
    <SidePanel>
      <TabStrip>
        <Tab $active $large>
          <Icon name="database" size={21} />
          Design Objects
        </Tab>
        <Tab $large>
          <Icon name="changeList" size={21} />
          Change Lists
        </Tab>
      </TabStrip>
      <SideTools>
        <ToolButton $wide aria-label="refresh">
          <Icon name="refresh" />
          <Arrow $line />
        </ToolButton>
        <Divider />
        <ToolButton $wide aria-label="filter">
          <Icon name="filter" />
          <Arrow $line />
        </ToolButton>
        <Divider />
        <Tools items={["collapse*"]} />
        <label htmlFor="find">Find</label>
        <FindInput id="find" />
        <Tools items={["binoculars", "|", "swap", "stop"]} />
      </SideTools>
      <TreePane>
        <TreeClip>
          <TreeList>
            {tree.map(([kind, level, state, icon, text, mark], i) => (
              <TreeRow key={i} $kind={kind} $level={level} $first={mark === "first"} $link={mark === "link"}>
                <Caret $open={state === "open"} $closed={state === "closed"} />
                {icon && (
                  <RowIcon>
                    <Icon name={icon} size={icon === "pack" ? 20 : 24} />
                  </RowIcon>
                )}
                {mark === "selected" ? <Selected>{text}</Selected> : text}
              </TreeRow>
            ))}
          </TreeList>
        </TreeClip>
        <Scroller before={454} thumb={350} after={33} />
      </TreePane>
    </SidePanel>
  );
}

function DropDown({ id, value, width, disabled }) {
  return (
    <SelectBox $width={width}>
      <Select id={id} disabled={disabled}>
        <option>{value}</option>
      </Select>
      <Icon name="dropdown" size={20} />
    </SelectBox>
  );
}

function Details() {
  const fields = [
    ["Name", "DT_SAP_Return_REQ"],
    ["Namespace", "urn:a123systems.com:Return"],
    ["Software Component Version", "SC_SRM, 1 of a123systems.com"],
    ["Description", ""],
  ];
  return (
    <Form>
      <HeaderRow>
        <Heading>
          <Icon name="dataType" />
          Display Data Type
        </Heading>
        <Spacer />
        <Label htmlFor="status">Status</Label>
        <Field $status id="status" readOnly value="Active" />
        <Label htmlFor="language">Displayed Language</Label>
        <DropDown id="language" value="English (OL)" width={129} />
      </HeaderRow>
      <FieldGrid>
        {fields.map(([label, value]) => (
          <React.Fragment key={label}>
            <label htmlFor={label}>{label}</label>
            <Field id={label} readOnly value={value} />
          </React.Fragment>
        ))}
      </FieldGrid>
      <OptionsRow>
        <OptionLabel htmlFor="classification">Classification</OptionLabel>
        <DropDown id="classification" value="Free-Style Data Type" width={207} disabled />
        <OptionLabel htmlFor="qualify">Qualify Schema</OptionLabel>
        <DropDown id="qualify" value="None" width={202} disabled />
      </OptionsRow>
    </Form>
  );
}

function DefinitionTable() {
  return (
    <Grid>
      <thead>
        <tr>
          {columns.map(([name, width]) => (
            <Th key={name} $width={width}>
              {name}
            </Th>
          ))}
        </tr>
      </thead>
      <tbody>
        <Tr>
          <SelectorTd>
            <RowSelector aria-label="Select row" />
          </SelectorTd>
          <Td>
            <NameCell $level={0}>
              <Caret $open />
            </NameCell>
          </Td>
          <Td>Complex Type</Td>
          {[...Array(8)].map((_, i) => (
            <Td key={i} />
          ))}
        </Tr>
        {elements.map(([level, name, type, occurrence, value, open]) => (
          <Tr key={name}>
            <SelectorTd>
              <RowSelector aria-label={`Select ${name}`} />
            </SelectorTd>
            <Td>
              <NameCell $level={level}>
                <Caret $open={open} />
                {name === "datajson" ? <Focused>{name}</Focused> : name}
              </NameCell>
            </Td>
            <Td>Element</Td>
            <Td>{type}</Td>
            <Td>{occurrence}</Td>
            <Td>{value}</Td>
            <Td>
              <Check type="checkbox" disabled aria-label={`${name} deletable`} />
            </Td>
            <Td />
            <Td />
            <Td />
            <Td />
          </Tr>
        ))}
      </tbody>
    </Grid>
  );
}

function Splitter() {
  return (
    <HSplit>
      <svg width="40" height="10" viewBox="0 0 40 10">
        <path d="M0 10L8 0l7 10z" fill="#5f8ab5" />
        <path d="M0 10L8 0" stroke="#111" strokeWidth="2" />
        <path d="M24 0h15l-7 10z" fill="#5f8ab5" />
        <path d="M24 1h15" stroke="#111" strokeWidth="2" />
      </svg>
      <HDots />
    </HSplit>
  );
}

function App() {
  return (
    <Window>
      <GlobalStyle />
      <TitleBar>
        <WindowTitle>
          <Icon name="app" size={25} />
          Enterprise Services Builder (sappodap01_POD_00)
        </WindowTitle>
        <WindowControls>
          <WindowButton aria-label="Minimize">
            <svg width="16" height="18" viewBox="0 0 16 18" stroke="#000">
              <path d="M0 9.500h16" />
            </svg>
          </WindowButton>
          <WindowButton aria-label="Maximize">
            <svg width="16" height="18" viewBox="0 0 16 18" stroke="#000" fill="none">
              <path d="M.5 1.500h15v15H.5z" />
            </svg>
          </WindowButton>
          <WindowButton aria-label="Close">
            <svg width="16" height="18" viewBox="0 0 16 18" stroke="#000">
              <path d="M.5 1.500l15 15M15.500 1.500l-15 15" />
            </svg>
          </WindowButton>
        </WindowControls>
      </TitleBar>
      <MenuBar>
        {["&Object", "&Navigation", "&Tools", "&Environment", "&Perspective", "&Help"].map((text) => (
          <Menu key={text} text={text} />
        ))}
      </MenuBar>
      <MainToolbar>
        <Tools
          items={["page", "folder", "copy", "trash", "|", "saveAll", "listCancel", "|", "whereUsed", "helpPage", "|", "back", "forward", "layout*", "|", "person"]}
        />
      </MainToolbar>
      <Workspace>
        <Sidebar />
        <VSplit>
          <VArrows>
            <svg width="9" height="46" viewBox="0 0 9 46">
              <path d="M9 4v18L0 13z" fill="#5f8ab5" />
              <path d="M9 4L0 13" stroke="#111" strokeWidth="2" />
              <path d="M1 28v16l8-8z" fill="#5f8ab5" />
              <path d="M1 28v16" stroke="#111" strokeWidth="2" />
            </svg>
          </VArrows>
          <VDots />
        </VSplit>
        <Editor>
          <EditorBar>
            <EditorMenu>
              {["&Data Type", "Ed&it", "&View", "Too&ls"].map((text) => (
                <Menu key={text} text={text} />
              ))}
            </EditorMenu>
            <Tools
              items={["edit*", "save", "copy", "|", "print", "info", "book", "whereUsed", "compare", "|", "hat*", "openBook", "scroll", "|", "molecule"]}
            />
            <Spacer />
            <Tools items={["pin", "close"]} />
          </EditorBar>
          <Details />
          <TabStrip>
            <Tab $active>Type Definition</Tab>
            <Tab>XSD</Tab>
          </TabStrip>
          <TablePanel>
            <TableTools>
              <ToolButton $wide disabled aria-label="Add">
                <Icon name="addRow" />
                <Arrow />
              </ToolButton>
              <Tools items={["removeRow", "|", "up", "down", "|", "refresh", "|"]} />
              <SearchBox>
                <label htmlFor="search">Search</label>
                <SearchInput id="search" />
              </SearchBox>
              <ToolButton disabled>Go</ToolButton>
              <Tools items={["|", "mapping"]} />
              <Spacer />
              <SettingsLink href="#settings">Settings...</SettingsLink>
            </TableTools>
            <GridArea>
              <GridClip>
                <DefinitionTable />
              </GridClip>
              <Scroller before={0} thumb={309} after={129} pad="34px 0 2px" />
            </GridArea>
          </TablePanel>
          <Splitter />
          <Splitter />
          <BottomTabs>
            <BottomTab $first>
              <Icon name="boxClock" />
              SC_SRM, 1 of a123systems.com
            </BottomTab>
            <BottomTab $active>
              <Icon name="dataType" />
              DT_SAP_Return_REQ
            </BottomTab>
            <BottomTab>
              <Icon name="dataType" />
              DT_SRM_Return_RES
            </BottomTab>
            <BottomTab>
              <Icon name="dataType" />
              DT_SRM_Receipt_RES
            </BottomTab>
          </BottomTabs>
        </Editor>
      </Workspace>
      <TaskBar>
        <TaskItem />
        <Clock>10:26</Clock>
      </TaskBar>
    </Window>
  );
}

export default App;
